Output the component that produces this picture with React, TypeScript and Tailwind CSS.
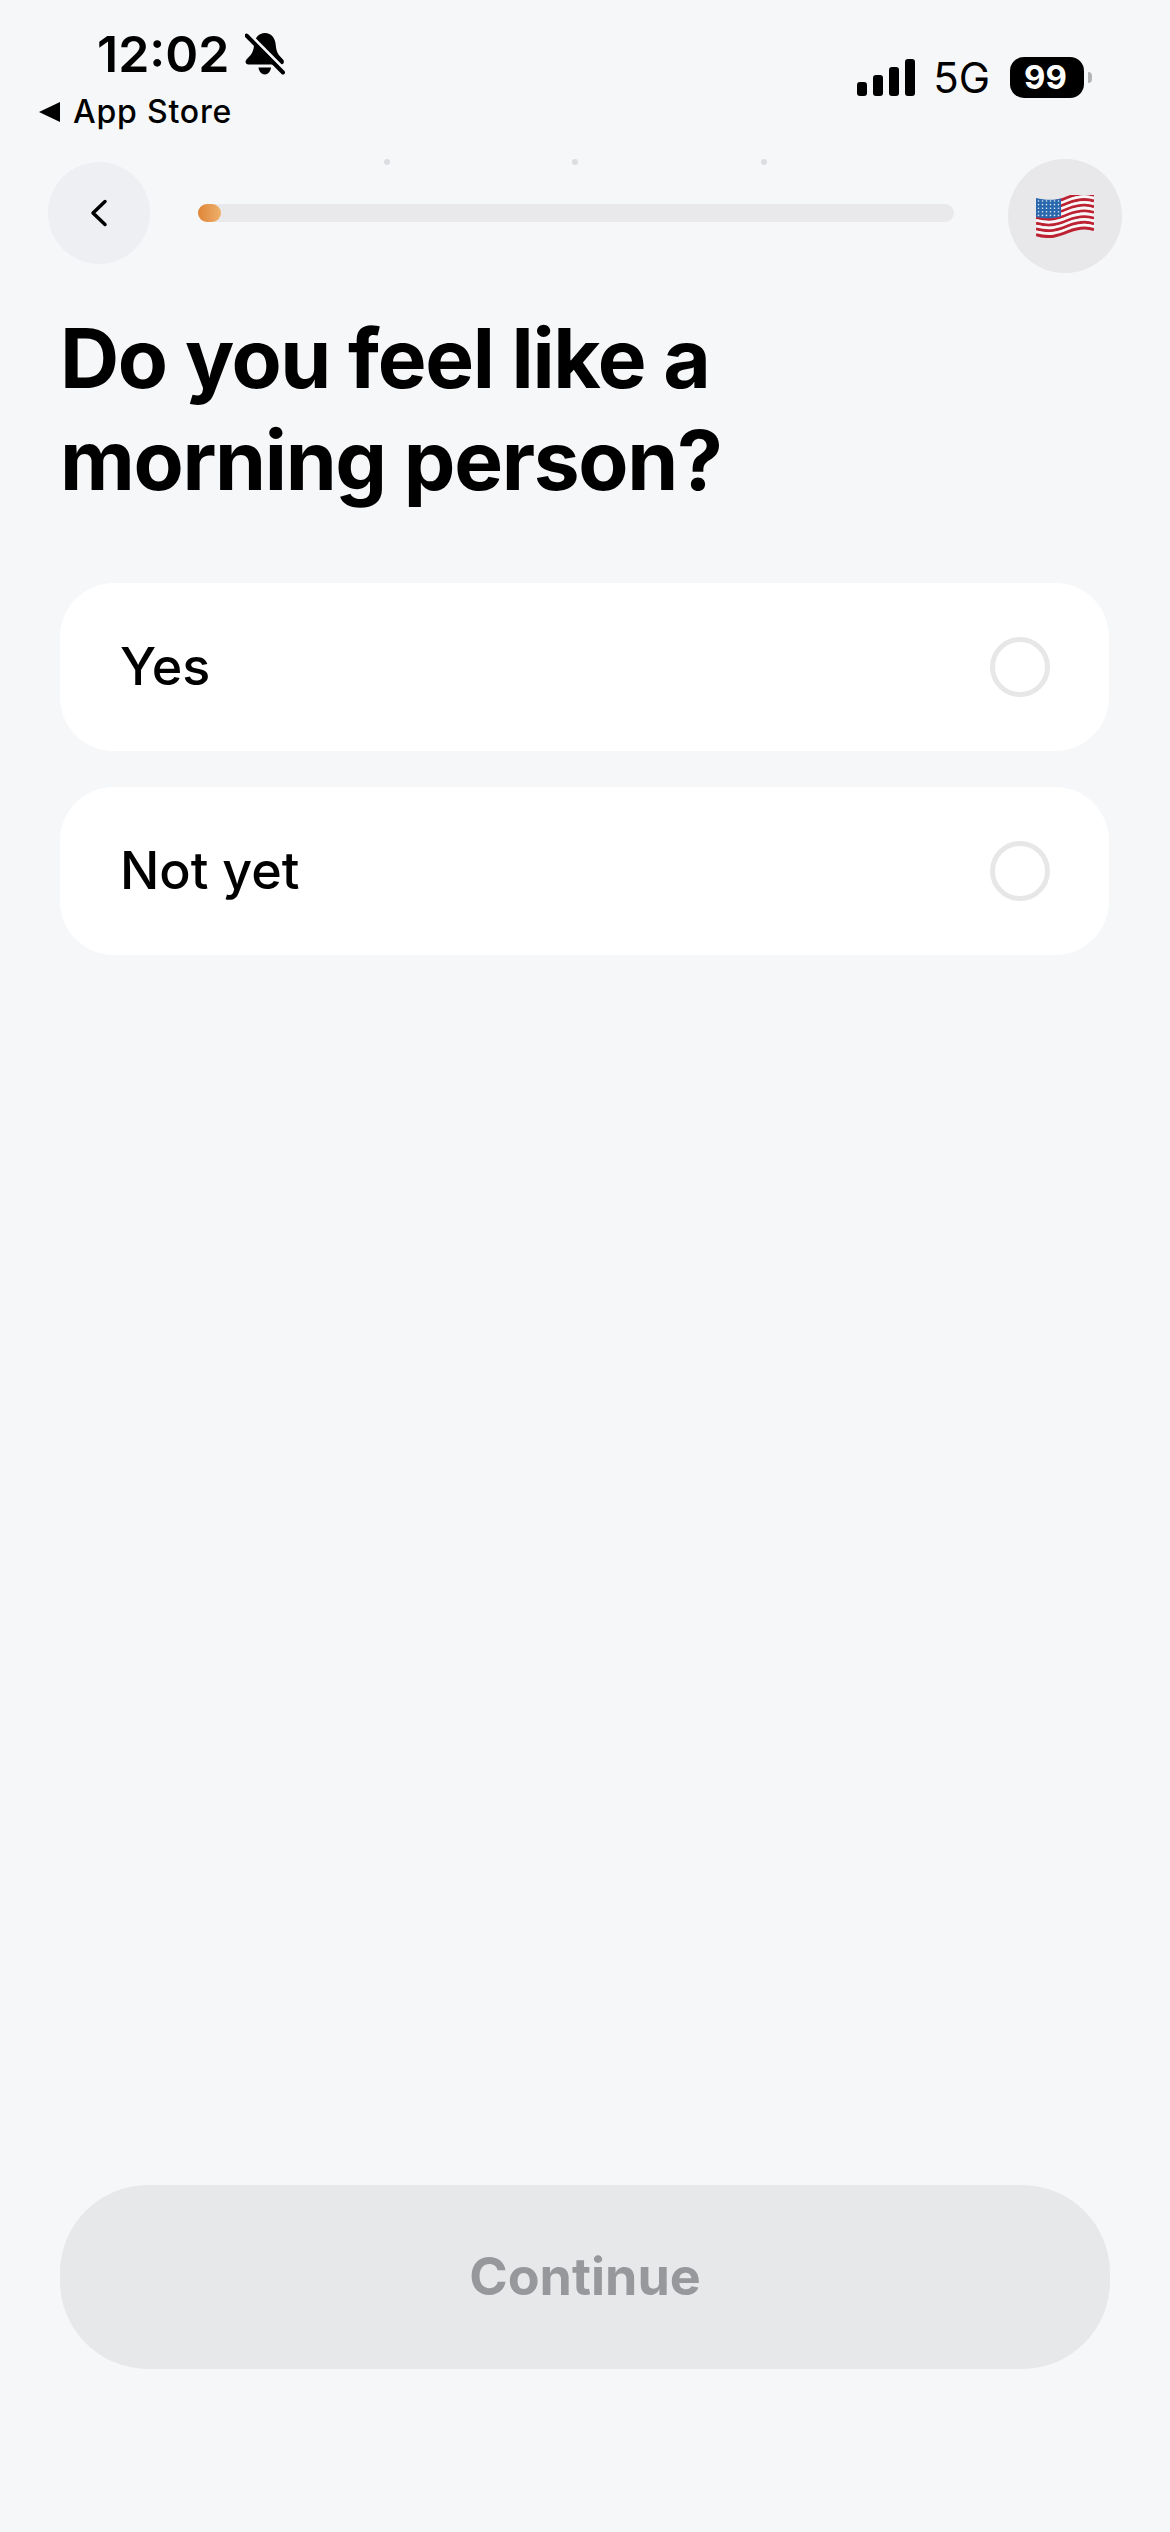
import React from 'react';

const BellSlash = () => (
  <svg width="40" height="42" viewBox="0 0 40 42">
    <path
      d="M20 0C13.500 0 9.500 5 9 12.500C8.500 19.500 5.500 22.500 1.500 26.500C-0.500 28.800 0.800 31.500 3.500 31.500H36C38.800 31.500 39.800 28.500 38 26.500C34 22.500 31.300 19.500 30.800 12.500C30.300 5 26.500 0 20 0Z"
      fill="#000"
    />
    <path d="M13.500 34.500H26C25.500 38.500 23 41.500 19.800 41.500C16.500 41.500 14 38.500 13.500 34.500Z" fill="#000" />
    <path d="M3.500 0L40.500 37.500" stroke="#f6f7f9" strokeWidth="3" />
    <path d="M1.500 2.500L38 39.500" stroke="#000" strokeWidth="4" strokeLinecap="round" />
  </svg>
);

const Signal = () => (
  <svg width="58" height="37" viewBox="0 0 58 37" fill="#000">
    <rect x="0" y="23" width="10" height="14" rx="3" />
    <rect x="16" y="16" width="10" height="21" rx="3" />
    <rect x="32" y="8" width="10" height="29" rx="3" />
    <rect x="48" y="0" width="10" height="37" rx="3" />
  </svg>
);

const Flag = () => {
  // stripes follow the same wave as the flag outline
  const stripes = Array.from({ length: 13 }, (_, i) => i);
  const wave = (y: number) => `M0 ${y + 3}C14 ${y + 7} 22 ${y + 4} 32 ${y}C42 ${y - 4} 50 ${y - 5} 58 ${y - 2}`;
  return (
    <svg width="58" height="43" viewBox="0 0 58 43">
      {stripes.map((i) => (
        <path
          key={i}
          d={wave(2.5 + i * 2.85)}
          fill="none"
          stroke={i % 2 === 0 ? '#bd2233' : '#f8f6f6'}
          strokeWidth="3"
        />
      ))}
      <path d="M0 3C8 5 17 5.500 25 3.500V21.500C17 24 8 23.500 0 22Z" fill="#2a68ad" />
      {Array.from({ length: 5 }, (_, r) =>
        Array.from({ length: 6 }, (_, c) => (
          <circle key={`${r}-${c}`} cx={2.5 + c * 4} cy={6 + r * 3.6} r="0.8" fill="#dfe9f5" />
        ))
      )}
    </svg>
  );
};

const options = ['Yes', 'Not yet'];

export default function App() {
  return (
    <div className="w-[1170px] h-[2532px] bg-[#f6f7f9] flex flex-col font-['Inter',sans-serif] text-black overflow-hidden">
      {/* Status bar */}
      <div className="h-[159px] flex justify-between">
        <div className="pl-[39px] pt-[29px]">
          <div className="pl-[58px] flex items-center gap-[16px] h-[50px]">
            <span className="text-[50px] leading-[50px] font-semibold">12:02</span>
            <BellSlash />
          </div>
          <div className="mt-[17px] flex items-center gap-[13px] h-[32px]">
            <span className="w-0 h-0 border-y-[10px] border-y-transparent border-r-[21px] border-r-black" />
            <span className="text-[32px] leading-[32px] font-[450] tracking-[0.8px]">App Store</span>
          </div>
        </div>
        <div className="pt-[57px] pr-[78px] h-[98px] flex items-end">
          <div className="mb-[2px]">
            <Signal />
          </div>
          <span className="ml-[18px] h-[41px] text-[42px] leading-[41px] font-normal">5G</span>
          <div className="ml-[20px] w-[74px] h-[41px] bg-black rounded-[14px] flex items-center pl-[14px]">
            <span className="text-[33px] leading-[33px] font-bold text-white">99</span>
          </div>
          <div className="ml-[4px] mb-[15px] w-[4px] h-[11px] rounded-r-full bg-[#b5b5b5]" />
        </div>
      </div>

      {/* Nav row */}
      <div className="h-[114px] px-[48px] flex items-start">
        <div className="mt-[3px] h-[102px] flex-1 flex items-center">
          <button className="w-[102px] h-[102px] rounded-full bg-[#eeeff3] flex items-center justify-center">
            <svg width="20" height="30" viewBox="0 0 20 30" fill="none">
              <path d="M16 3.500L4 15L16 26.500" stroke="#000" strokeWidth="3.500" strokeLinecap="round" strokeLinejoin="round" />
            </svg>
          </button>
          <div className="relative ml-[48px] w-[756px] h-[18px] rounded-full bg-[#e9e9eb]">
            <div className="w-[23px] h-[18px] rounded-full bg-gradient-to-r from-[#df8538] to-[#eeb06a]" />
            <span className="absolute left-[186px] top-[-45px] w-[6px] h-[6px] rounded-full bg-[#dcdde1]" />
            <span className="absolute left-[374px] top-[-45px] w-[6px] h-[6px] rounded-full bg-[#dcdde1]" />
            <span className="absolute left-[563px] top-[-45px] w-[6px] h-[6px] rounded-full bg-[#dcdde1]" />
          </div>
        </div>
        <div className="w-[114px] h-[114px] rounded-full bg-[#e8e8ea] flex items-center justify-center">
          <Flag />
        </div>
      </div>

      {/* Question */}
      <h1 className="mt-[35px] ml-[60px] text-[82px] leading-[102px] font-bold tracking-[-1.35px]">
        Do you feel like a
        <br />
        morning person?
      </h1>

      {/* Options */}
      <div className="mt-[71px] ml-[60px] mr-[61px] flex flex-col gap-[36px]">
        {options.map((option) => (
          <div key={option} className="h-[168px] bg-white rounded-[54px] pl-[60px] pr-[59px] flex items-center justify-between">
            <span className="text-[52px] leading-[60px] font-[450]">{option}</span>
            <span className="w-[60px] h-[60px] rounded-full border-[5px] border-[#e7e7e7]" />
          </div>
        ))}
      </div>

      {/* Continue */}
      <div className="mt-auto mb-[163px] mx-[60px]">
        <button className="w-full h-[184px] rounded-[88px] bg-[#e7e8ea] text-[#97989b] text-[52px] leading-[60px] font-bold">
          Continue
        </button>
      </div>
    </div>
  );
}
